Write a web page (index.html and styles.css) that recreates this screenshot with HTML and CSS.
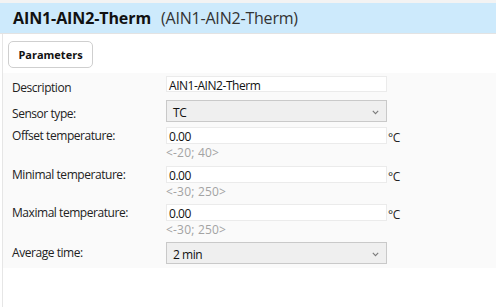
FILE: index.html
```html
<!DOCTYPE html>
<html lang="en">
<head>
    <meta charset="UTF-8">
    <title>AIN1-AIN2-Therm</title>
    <link rel="stylesheet" href="styles.css">
</head>
<body>
    <div class="top-strip"></div>
    <div class="header">
        <span class="title">AIN1-AIN2-Therm</span>
        <span class="subtitle">(AIN1-AIN2-Therm)</span>
    </div>

    <div class="content">
        <button class="tab">Parameters</button>

        <div class="form">
            <label class="lbl">Description</label>
            <div class="input input-desc">AIN1-AIN2-Therm</div>
            <span></span>

            <label class="lbl">Sensor type:</label>
            <div class="select select-sensor">
                <span>TC</span>
                <svg width="7" height="5" viewBox="0 0 7 5"><path d="M0.8 0.8 L3.5 3.6 L6.2 0.8" fill="none" stroke="#7a7a7a" stroke-width="1.1"/></svg>
            </div>
            <span></span>

            <label class="lbl">Offset temperature:</label>
            <div class="input">0.00</div>
            <span class="unit">°C</span>
            <span></span>
            <div class="hint">&lt;-20; 40&gt;</div>
            <span></span>

            <label class="lbl">Minimal temperature:</label>
            <div class="input">0.00</div>
            <span class="unit">°C</span>
            <span></span>
            <div class="hint hint-tight">&lt;-30; 250&gt;</div>
            <span></span>

            <label class="lbl">Maximal temperature:</label>
            <div class="input">0.00</div>
            <span class="unit">°C</span>
            <span></span>
            <div class="hint hint-tight">&lt;-30; 250&gt;</div>
            <span></span>

            <label class="lbl">Average time:</label>
            <div class="select">
                <span>2 min</span>
                <svg width="7" height="5" viewBox="0 0 7 5"><path d="M0.8 0.8 L3.5 3.6 L6.2 0.8" fill="none" stroke="#7a7a7a" stroke-width="1.1"/></svg>
            </div>
            <span></span>
        </div>
    </div>
</body>
</html>
```

FILE: styles.css
```css
body {
    margin: 0;
    height: 307px;
    overflow: hidden;
    background: #ffffff;
    font-family: 'Open Sans', 'Noto Sans', sans-serif;
    color: #1a1a1a;
}

.top-strip {
    height: 3px;
    background: #f3f3f3;
}

.header {
    height: 30px;
    display: flex;
    align-items: center;
    gap: 10px;
    padding-left: 13px;
    background: #cdeafc;
    border-bottom: 1px solid #e3e3e3;
}

.title {
    font-size: 16px;
    font-weight: 700;
    letter-spacing: -0.1px;
    color: #111;
}

.subtitle {
    font-size: 16px;
    letter-spacing: -0.2px;
    color: #333;
}

.content {
    margin-left: 2px;
    border-left: 1px solid #e6e6e6;
    height: 273px;
    padding-top: 7px;
    box-sizing: border-box;
}

.tab {
    display: block;
    margin-left: 5px;
    width: 85px;
    height: 27px;
    background: #ffffff;
    border: 1px solid #cfcfcf;
    border-radius: 5px;
    font-family: 'Open Sans', 'Noto Sans', sans-serif;
    font-size: 11px;
    font-weight: 700;
    color: #111;
    padding: 0;
}

.form {
    margin-top: 5px;
    background: #fafafa;
    padding: 3px 0 4px 0;
    display: grid;
    grid-template-columns: 163px 221px auto;
    align-items: center;
    font-size: 12px;
    letter-spacing: -0.45px;
}

.lbl {
    padding-left: 9px;
    line-height: 16px;
    color: #222;
}

.input {
    height: 17px;
    box-sizing: border-box;
    background: #ffffff;
    border: 1px solid #ebebeb;
    padding: 1px 0 0 2px;
    line-height: 15px;
    color: #111;
}

.input-desc {
    height: 16px;
    margin-bottom: 8px;
}

.select {
    height: 22px;
    box-sizing: border-box;
    background: #efefef;
    border: 1px solid #c9c9c9;
    display: flex;
    align-items: center;
    justify-content: space-between;
    padding: 2px 7px 0 6px;
    color: #111;
}

.select-sensor {
    margin-bottom: 5px;
}

.unit {
    align-self: end;
    line-height: 13px;
    padding-left: 1px;
    color: #222;
}

.hint {
    padding-top: 2px;
    height: 16px;
    box-sizing: border-box;
    line-height: 14px;
    font-size: 12px;
    letter-spacing: 0.2px;
    color: #a3a3a3;
    margin-bottom: 6px;
}

.hint-tight {
    margin-bottom: 5px;
}
```
